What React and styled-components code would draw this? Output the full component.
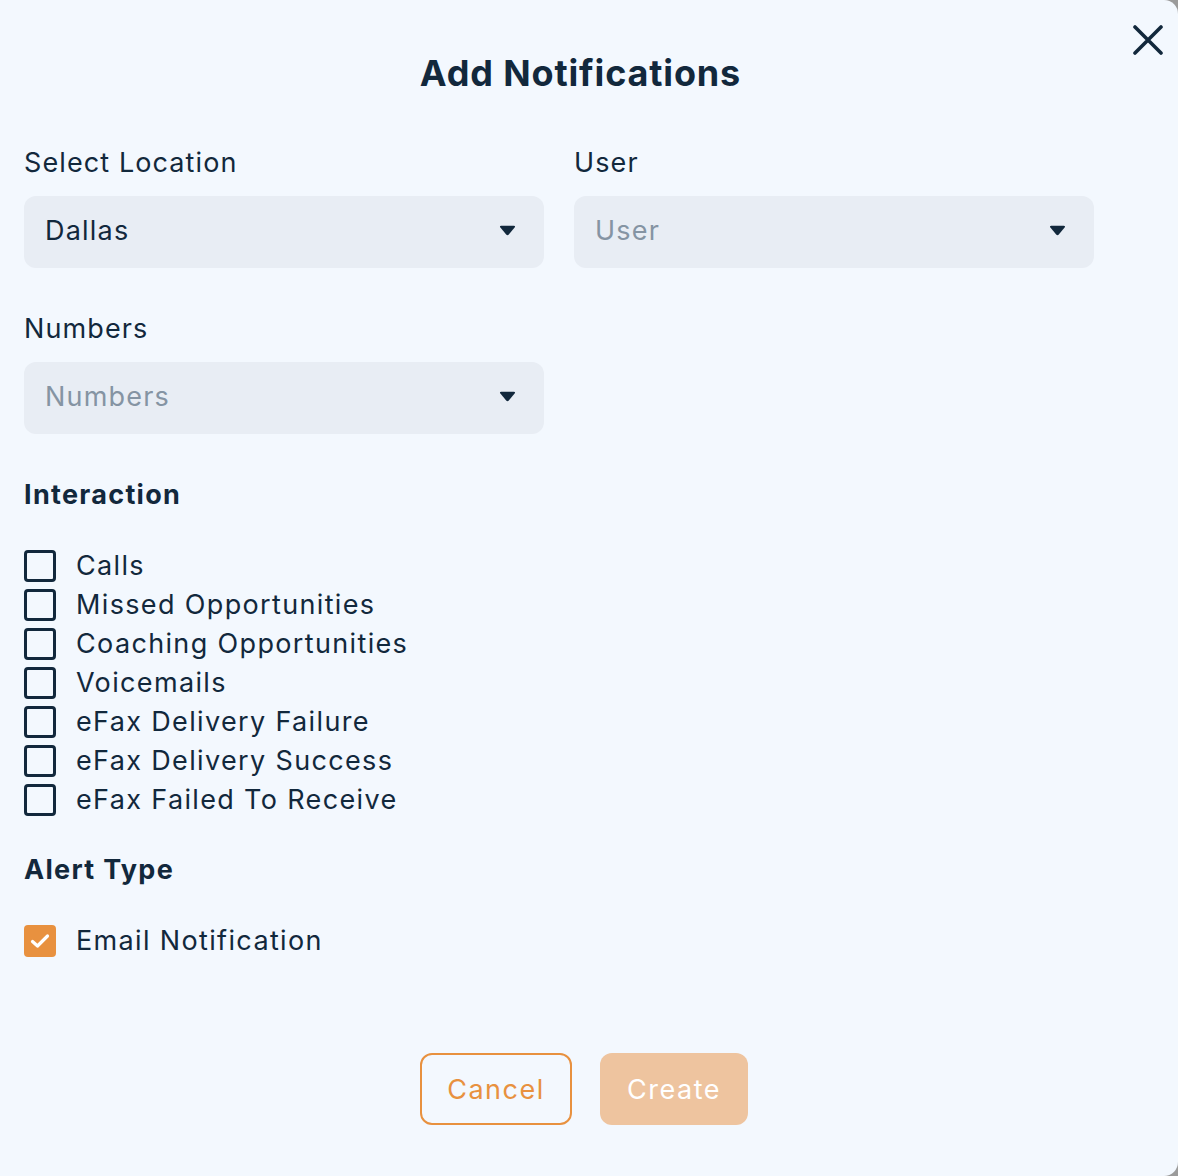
import React, { useState } from "react";
import styled, { createGlobalStyle } from "styled-components";

const GlobalStyle = createGlobalStyle`
  html, body {
    margin: 0;
    padding: 0;
    background: #9b9b9b;
  }
  * { box-sizing: border-box; }
`;

const Dialog = styled.div`
  position: relative;
  width: 1178px;
  height: 1176px;
  background: #f3f8fe;
  border-radius: 0 14px 14px 0;
  padding: 45px 24px 0 24px;
  font-family: Inter, "Noto Sans", sans-serif;
  color: #12283c;
  display: flex;
  flex-direction: column;
`;

const CloseButton = styled.button`
  position: absolute;
  top: 22px;
  right: 12px;
  width: 36px;
  height: 36px;
  padding: 0;
  border: none;
  background: transparent;
  display: flex;
  align-items: center;
  justify-content: center;
  cursor: pointer;
`;

const Title = styled.h1`
  margin: 0 17px 0 0;
  font-size: 36px;
  line-height: 56px;
  font-weight: 700;
  text-align: center;
  letter-spacing: 0.85px;
`;

const FieldGrid = styled.div`
  display: grid;
  grid-template-columns: 520px 520px;
  column-gap: 30px;
  row-gap: 41px;
  margin-top: 42px;
`;

const Field = styled.div`
  display: flex;
  flex-direction: column;
  gap: 13px;
`;

const Label = styled.label`
  font-size: 27px;
  line-height: 40px;
  font-weight: 400;
  letter-spacing: 1.1px;
`;

const SelectBox = styled.div`
  height: 72px;
  border-radius: 12px;
  background: #e8edf4;
  display: flex;
  align-items: center;
  justify-content: space-between;
  padding: 0 28px 3px 21px;
  font-size: 27px;
  letter-spacing: 1.2px;
  color: ${(p) => (p.$placeholder ? "#8594a3" : "#12283c")};
`;

const SectionTitle = styled.h2`
  margin: ${(p) => p.$top}px 0 0 0;
  font-size: 27px;
  line-height: 40px;
  font-weight: 700;
  letter-spacing: 1.3px;
`;

const CheckList = styled.div`
  display: flex;
  flex-direction: column;
  margin-top: 31px;
`;

const CheckRow = styled.label`
  display: flex;
  align-items: center;
  gap: 20px;
  height: 39px;
  font-size: 27px;
  letter-spacing: 1.35px;
  cursor: pointer;
`;

const Box = styled.span`
  width: 32px;
  height: 32px;
  flex: none;
  border-radius: 4px;
  border: ${(p) => (p.$checked ? "none" : "3px solid #12283c")};
  background: ${(p) => (p.$checked ? "#e8913f" : "transparent")};
  display: flex;
  align-items: center;
  justify-content: center;
`;

const ButtonRow = styled.div`
  display: flex;
  justify-content: center;
  gap: 28px;
  margin-top: 93px;
  margin-right: 10px;
`;

const Button = styled.button`
  height: 72px;
  width: ${(p) => p.$w}px;
  border-radius: 12px;
  font-family: Inter, "Noto Sans", sans-serif;
  font-size: 27px;
  font-weight: 400;
  letter-spacing: 1.5px;
  cursor: pointer;
  border: ${(p) => (p.$primary ? "none" : "2px solid #e8913f")};
  background: ${(p) => (p.$primary ? "#eec49f" : "transparent")};
  color: ${(p) => (p.$primary ? "#ffffff" : "#e8913f")};
`;

const Caret = () => (
  <svg width="17" height="11" viewBox="0 0 17 11">
    <path
      d="M2.2 0.8 H14.8 Q16.8 0.8 15.6 2.6 L9.8 9.4 Q8.5 10.9 7.2 9.4 L1.4 2.6 Q0.2 0.8 2.2 0.8 Z"
      fill="#12283c"
    />
  </svg>
);

const Check = () => (
  <svg width="22" height="18" viewBox="0 0 22 18">
    <path
      d="M3.5 9.5 L8.5 14 L18.5 4"
      fill="none"
      stroke="#fff"
      strokeWidth="3.2"
      strokeLinecap="round"
      strokeLinejoin="round"
    />
  </svg>
);

const Select = ({ value, placeholder }) => (
  <SelectBox $placeholder={!value}>
    <span>{value || placeholder}</span>
    <Caret />
  </SelectBox>
);

const interactions = [
  "Calls",
  "Missed Opportunities",
  "Coaching Opportunities",
  "Voicemails",
  "eFax Delivery Failure",
  "eFax Delivery Success",
  "eFax Failed To Receive",
];

export default function App() {
  const [checked, setChecked] = useState({ "Email Notification": true });
  const toggle = (k) => setChecked((c) => ({ ...c, [k]: !c[k] }));

  return (
    <>
      <GlobalStyle />
      <Dialog>
        <CloseButton aria-label="Close">
          <svg width="30" height="30" viewBox="0 0 30 30">
            <path
              d="M2 2 L28 28 M28 2 L2 28"
              stroke="#12283c"
              strokeWidth="3.6"
              strokeLinecap="round"
            />
          </svg>
        </CloseButton>

        <Title>Add Notifications</Title>

        <FieldGrid>
          <Field>
            <Label>Select Location</Label>
            <Select value="Dallas" />
          </Field>
          <Field>
            <Label>User</Label>
            <Select placeholder="User" />
          </Field>
          <Field>
            <Label>Numbers</Label>
            <Select placeholder="Numbers" />
          </Field>
        </FieldGrid>

        <SectionTitle $top={41}>Interaction</SectionTitle>
        <CheckList>
          {interactions.map((item) => (
            <CheckRow key={item} onClick={() => toggle(item)}>
              <Box $checked={!!checked[item]}>{checked[item] && <Check />}</Box>
              <span>{item}</span>
            </CheckRow>
          ))}
        </CheckList>

        <SectionTitle $top={31}>Alert Type</SectionTitle>
        <CheckList>
          <CheckRow onClick={() => toggle("Email Notification")}>
            <Box $checked={!!checked["Email Notification"]}>
              {checked["Email Notification"] && <Check />}
            </Box>
            <span>Email Notification</span>
          </CheckRow>
        </CheckList>

        <ButtonRow>
          <Button $w={152}>Cancel</Button>
          <Button $w={148} $primary>
            Create
          </Button>
        </ButtonRow>
      </Dialog>
    </>
  );
}
